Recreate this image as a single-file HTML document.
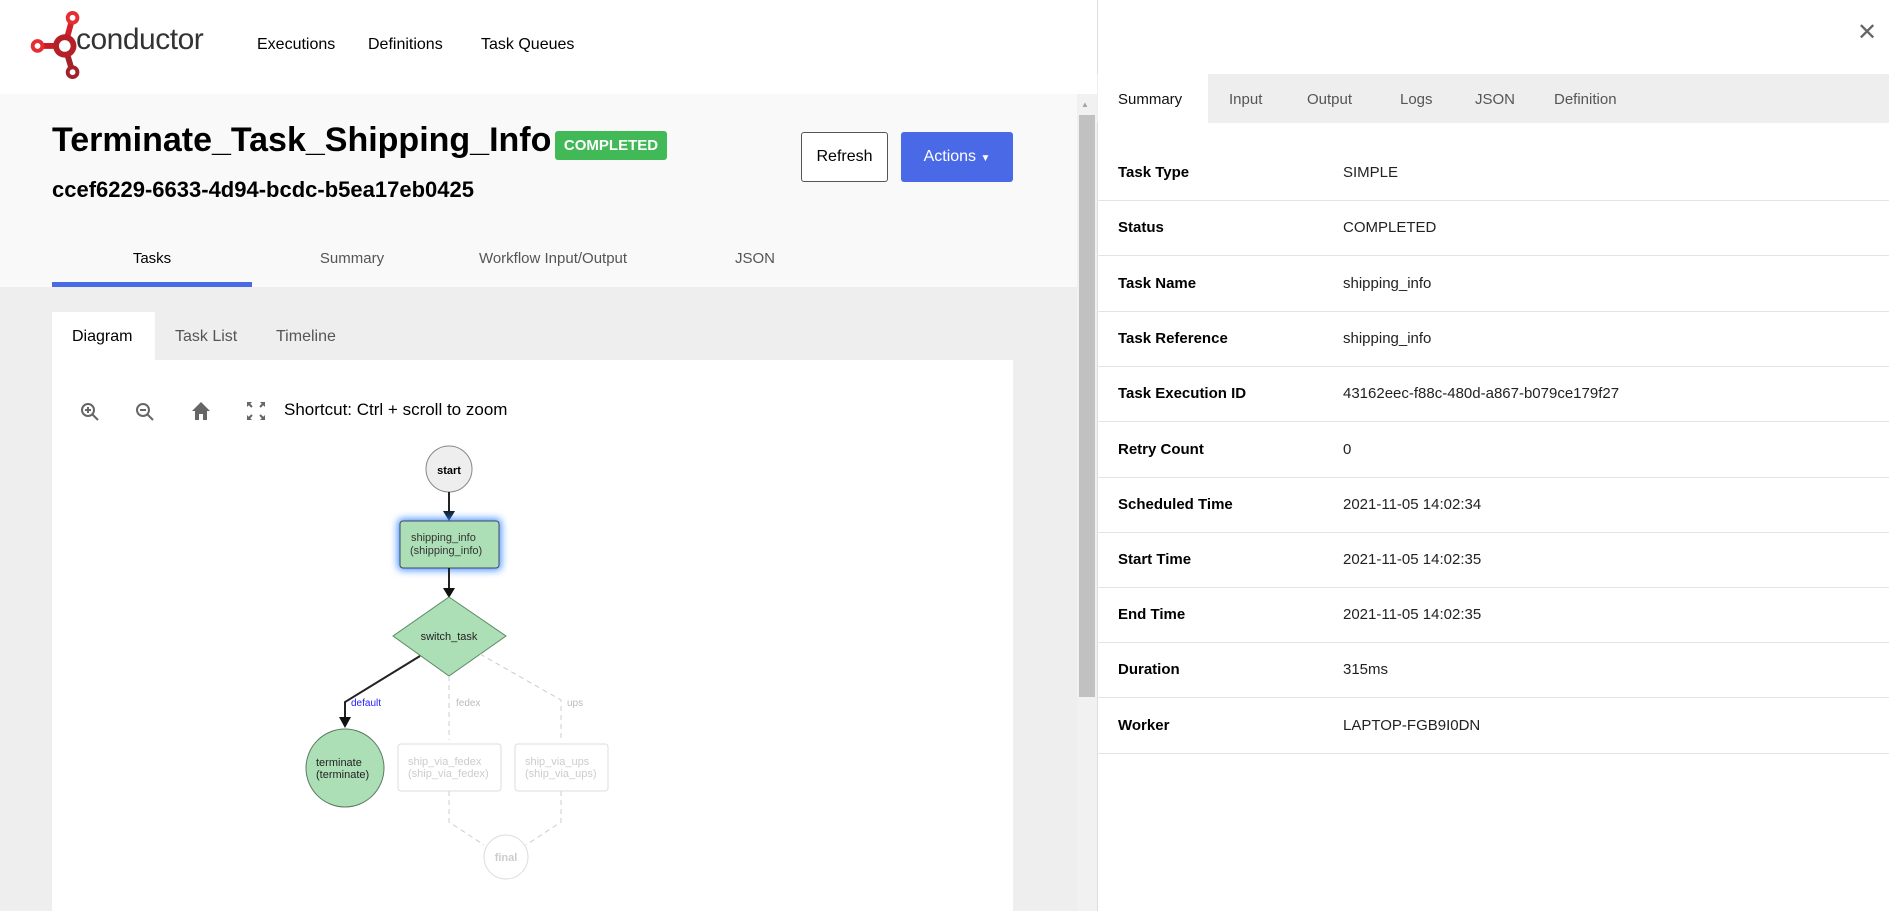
<!DOCTYPE html>
<html><head><meta charset="utf-8"><style>
*{box-sizing:border-box;margin:0;padding:0}
body{width:1889px;height:911px;overflow:hidden;font-family:"Liberation Sans",sans-serif;background:#fff;position:relative;color:#000}
.a{position:absolute;white-space:nowrap}
.nav{font-size:16px;top:36px}
.row{position:absolute;left:1097px;width:792px;border-bottom:1px solid #e4e4e4;height:56px}
.row .l{position:absolute;left:21px;top:19px;font-weight:bold;font-size:15px}
.row .v{position:absolute;left:246px;top:19px;font-size:15px;color:#222}
.rt{position:absolute;top:91px;font-size:15px;color:#555}
</style></head><body>
<!-- header -->
<svg class="a" style="left:26px;top:10px" width="62" height="70" viewBox="0 0 60 72">
<line x1="14" y1="37" x2="38" y2="37" stroke="#c91c24" stroke-width="6"/>
<line x1="38" y1="37" x2="46" y2="8" stroke="#d02028" stroke-width="6"/>
<line x1="38" y1="37" x2="46" y2="64" stroke="#a2222a" stroke-width="6"/>
<circle cx="10" cy="37" r="7" fill="#e52e33"/><circle cx="10" cy="37" r="3" fill="#fff"/>
<circle cx="46" cy="8" r="7" fill="#e52e33"/><circle cx="46" cy="8" r="3" fill="#fff"/>
<circle cx="46" cy="64" r="7" fill="#a2222a"/><circle cx="46" cy="64" r="3" fill="#fff"/>
<circle cx="38" cy="37" r="12" fill="#b51f27"/><circle cx="38" cy="37" r="6" fill="#fff"/>
</svg>
<div class="a" style="left:76px;top:23px;font-size:30px;color:#333;letter-spacing:-0.5px">conductor</div>
<div class="a nav" style="left:257px">Executions</div>
<div class="a nav" style="left:368px">Definitions</div>
<div class="a nav" style="left:481px">Task Queues</div>
<!-- left content -->
<div class="a" style="left:0;top:94px;width:1077px;height:193px;background:#f9f9f9"></div>
<div class="a" style="left:0;top:287px;width:1077px;height:624px;background:#eee"></div>
<div class="a" style="left:1077px;top:94px;width:20px;height:817px;background:#f1f1f1"></div>
<div class="a" style="left:1079px;top:115px;width:16px;height:582px;background:#c1c1c1"></div>
<div class="a" style="left:1081px;top:100px;font-size:8px;color:#a3a3a3">▲</div>
<div class="a" style="left:52px;top:121px;font-size:34px;font-weight:bold">Terminate_Task_Shipping_Info</div>
<div class="a" style="left:555px;top:131px;width:112px;height:29px;background:#41b957;border-radius:3px;color:#fff;font-size:15px;font-weight:bold;text-align:center;line-height:29px">COMPLETED</div>
<div class="a" style="left:52px;top:177px;font-size:22px;font-weight:bold">ccef6229-6633-4d94-bcdc-b5ea17eb0425</div>
<div class="a" style="left:801px;top:132px;width:87px;height:50px;border:1px solid #555;border-radius:3px;background:#fff;font-size:16px;text-align:center;line-height:48px">Refresh</div>
<div class="a" style="left:901px;top:132px;width:112px;height:50px;border-radius:3px;background:#4969e6;color:#fff;font-size:16px;text-align:center;line-height:50px">Actions <span style="font-size:10px">▼</span></div>
<div class="a" style="left:52px;top:250px;width:200px;text-align:center;font-size:15px">Tasks</div>
<div class="a" style="left:252px;top:250px;width:200px;text-align:center;font-size:15px;color:#555">Summary</div>
<div class="a" style="left:453px;top:250px;width:200px;text-align:center;font-size:15px;color:#555">Workflow Input/Output</div>
<div class="a" style="left:655px;top:250px;width:200px;text-align:center;font-size:15px;color:#555">JSON</div>
<div class="a" style="left:52px;top:282px;width:200px;height:5px;background:#4969e6"></div>
<div class="a" style="left:52px;top:312px;width:103px;height:48px;background:#fff"></div>
<div class="a" style="left:52px;top:360px;width:961px;height:551px;background:#fff"></div>
<div class="a" style="left:72px;top:328px;font-size:16px">Diagram</div>
<div class="a" style="left:175px;top:328px;font-size:16px;color:#555">Task List</div>
<div class="a" style="left:276px;top:328px;font-size:16px;color:#555">Timeline</div>
<!-- toolbar icons -->
<svg class="a" style="left:78px;top:399px" width="200" height="28" viewBox="0 0 200 28">
<g stroke="#666" fill="none" stroke-width="2"><circle cx="10" cy="11" r="6"/><line x1="14" y1="15" x2="20" y2="21"/><line x1="7" y1="11" x2="13" y2="11"/><line x1="10" y1="8" x2="10" y2="14"/>
<circle cx="65" cy="11" r="6"/><line x1="69" y1="15" x2="75" y2="21"/><line x1="62" y1="11" x2="68" y2="11"/></g>
<path d="M123 3 L114 12 H117 V21 H121 V15 H125 V21 H129 V12 H132 Z" fill="#666"/>
<g stroke="#666" stroke-width="2" fill="none"><path d="M170 4l4 4M186 4l-4 4M170 20l4-4M186 20l-4-4"/></g>
<g fill="#666"><path d="M169 3h5l-5 5z M187 3h-5l5 5z M169 21h5l-5-5z M187 21h-5l5-5z"/></g>
</svg>
<div class="a" style="left:284px;top:400px;font-size:17px">Shortcut: Ctrl + scroll to zoom</div>
<!-- diagram -->
<svg class="a" style="left:0;top:0" width="1077" height="911">
<defs><filter id="g" x="-50%" y="-50%" width="200%" height="200%"><feGaussianBlur stdDeviation="4"/></filter></defs>
<circle cx="449" cy="469" r="23" fill="#eee" stroke="#888"/>
<text x="449" y="474" text-anchor="middle" font-size="11" font-weight="bold" font-family="Liberation Sans">start</text>
<line x1="449" y1="492" x2="449" y2="512" stroke="#222" stroke-width="2"/><path d="M443 511 L455 511 L449 521Z" fill="#123"/>
<rect x="398" y="519" width="103" height="51" rx="4" fill="#3b8cff" filter="url(#g)"/>
<rect x="400" y="521" width="99" height="47" rx="3" fill="#addfb6" stroke="#446"/>
<text x="411" y="541" font-size="11" fill="#333" font-family="Liberation Sans">shipping_info</text>
<text x="410" y="554" font-size="11" fill="#333" font-family="Liberation Sans">(shipping_info)</text>
<line x1="449" y1="568" x2="449" y2="590" stroke="#222" stroke-width="2"/><path d="M443 588 L455 588 L449 598Z" fill="#111"/>
<path d="M449 597 L506 636 L449 676 L393 636Z" fill="#addfb6" stroke="#5a8a63"/>
<text x="449" y="640" text-anchor="middle" font-size="11" fill="#222" font-family="Liberation Sans">switch_task</text>
<path d="M420 656 L345 702 L345 718" fill="none" stroke="#222" stroke-width="2"/><path d="M339 717 L351 717 L345 728Z" fill="#111"/>
<text x="351" y="706" font-size="10" fill="#22f" font-family="Liberation Sans">default</text>
<g stroke="#ccc" stroke-dasharray="5,4" fill="none"><path d="M449 676 V740"/><path d="M480 654 L561 700 V740"/><path d="M449 791 V822 L484 845"/><path d="M561 791 V822 L526 845"/></g>
<text x="456" y="706" font-size="10" fill="#bbb" font-family="Liberation Sans">fedex</text>
<text x="567" y="706" font-size="10" fill="#bbb" font-family="Liberation Sans">ups</text>
<circle cx="345" cy="768" r="39" fill="#addfb6" stroke="#5a7a5f"/>
<text x="316" y="766" font-size="11" fill="#222" font-family="Liberation Sans">terminate</text>
<text x="316" y="778" font-size="11" fill="#222" font-family="Liberation Sans">(terminate)</text>
<rect x="398" y="744" width="103" height="47" rx="3" fill="#fff" stroke="#ddd"/>
<text x="408" y="765" font-size="11" fill="#ccc" font-family="Liberation Sans">ship_via_fedex</text>
<text x="408" y="777" font-size="11" fill="#ccc" font-family="Liberation Sans">(ship_via_fedex)</text>
<rect x="515" y="744" width="93" height="47" rx="3" fill="#fff" stroke="#ddd"/>
<text x="525" y="765" font-size="11" fill="#ccc" font-family="Liberation Sans">ship_via_ups</text>
<text x="525" y="777" font-size="11" fill="#ccc" font-family="Liberation Sans">(ship_via_ups)</text>
<circle cx="506" cy="857" r="22" fill="#fff" stroke="#ddd"/>
<text x="506" y="861" text-anchor="middle" font-size="11" font-weight="bold" fill="#ccc" font-family="Liberation Sans">final</text>
</svg>
<!-- right panel -->
<div class="a" style="left:1097px;top:0;width:792px;height:911px;background:#fff;border-left:1px solid #ddd"></div>
<div class="a" style="left:1857px;top:18px;font-size:24px;color:#666;font-weight:200">✕</div>
<div class="a" style="left:1097px;top:74px;width:792px;height:49px;background:#eee"></div>
<div class="a" style="left:1098px;top:74px;width:110px;height:49px;background:#fff"></div>
<div class="rt" style="left:1118px;color:#111">Summary</div>
<div class="rt" style="left:1229px">Input</div>
<div class="rt" style="left:1307px">Output</div>
<div class="rt" style="left:1400px">Logs</div>
<div class="rt" style="left:1475px">JSON</div>
<div class="rt" style="left:1554px">Definition</div>
<div class="row" style="top:145px"><span class="l">Task Type</span><span class="v">SIMPLE</span></div>
<div class="row" style="top:200px"><span class="l">Status</span><span class="v">COMPLETED</span></div>
<div class="row" style="top:256px"><span class="l">Task Name</span><span class="v">shipping_info</span></div>
<div class="row" style="top:311px"><span class="l">Task Reference</span><span class="v">shipping_info</span></div>
<div class="row" style="top:366px"><span class="l">Task Execution ID</span><span class="v">43162eec-f88c-480d-a867-b079ce179f27</span></div>
<div class="row" style="top:422px"><span class="l">Retry Count</span><span class="v">0</span></div>
<div class="row" style="top:477px"><span class="l">Scheduled Time</span><span class="v">2021-11-05 14:02:34</span></div>
<div class="row" style="top:532px"><span class="l">Start Time</span><span class="v">2021-11-05 14:02:35</span></div>
<div class="row" style="top:587px"><span class="l">End Time</span><span class="v">2021-11-05 14:02:35</span></div>
<div class="row" style="top:642px"><span class="l">Duration</span><span class="v">315ms</span></div>
<div class="row" style="top:698px"><span class="l">Worker</span><span class="v">LAPTOP-FGB9I0DN</span></div>
</body></html>
